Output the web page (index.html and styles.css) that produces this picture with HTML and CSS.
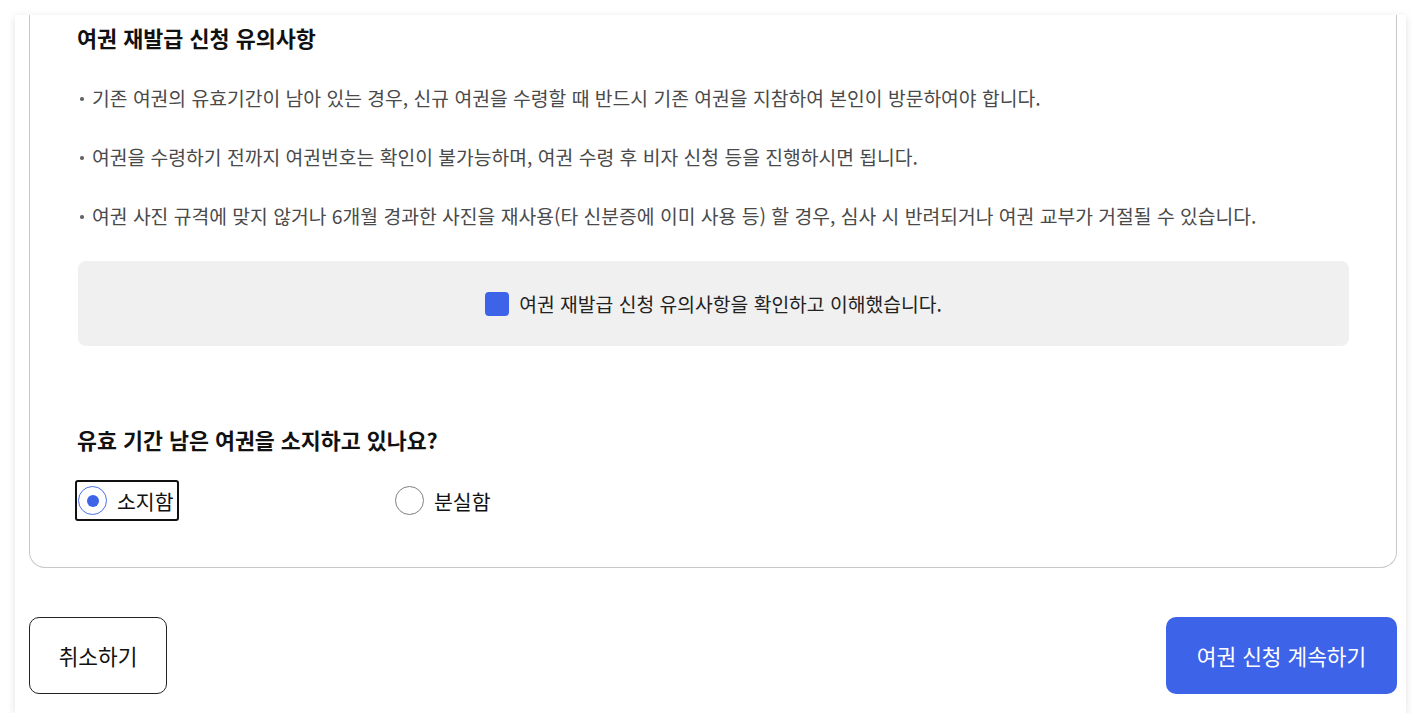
FILE: index.html
```html
<!DOCTYPE html>
<html lang="ko">
<head>
    <meta charset="utf-8">
    <title>여권 재발급 신청</title>
    <link rel="stylesheet" href="styles.css">
</head>
<body>
    <div class="card">
        <div class="notice">
            <h2 class="notice-title">여권 재발급 신청 유의사항</h2>
            <ul class="notice-list">
                <li>기존 여권의 유효기간이 남아 있는 경우, 신규 여권을 수령할 때 반드시 기존 여권을 지참하여 본인이 방문하여야 합니다.</li>
                <li>여권을 수령하기 전까지 여권번호는 확인이 불가능하며, 여권 수령 후 비자 신청 등을 진행하시면 됩니다.</li>
                <li>여권 사진 규격에 맞지 않거나 6개월 경과한 사진을 재사용(타 신분증에 이미 사용 등) 할 경우, 심사 시 반려되거나 여권 교부가 거절될 수 있습니다.</li>
            </ul>

            <!-- 동의 체크 -->
            <div class="agree-box">
                <label class="agree">
                    <span class="check"></span>
                    여권 재발급 신청 유의사항을 확인하고 이해했습니다.
                </label>
            </div>

            <h2 class="question">유효 기간 남은 여권을 소지하고 있나요?</h2>
            <div class="radio-group">
                <label class="radio focused">
                    <span class="radio-mark checked"></span>
                    소지함
                </label>
                <label class="radio">
                    <span class="radio-mark"></span>
                    분실함
                </label>
            </div>
        </div>

        <div class="actions">
            <button class="btn btn-cancel" type="button">취소하기</button>
            <button class="btn btn-primary" type="button">여권 신청 계속하기</button>
        </div>
    </div>
</body>
</html>
```

FILE: styles.css
```css
body {
    margin: 0;
    padding: 15px 15px 0 15px;
    background: #fff;
    font-family: "Noto Sans CJK KR", "Noto Sans", sans-serif;
    color: #111;
}

.card {
    background: #fff;
    box-shadow: 0 2px 8px rgba(0, 0, 0, 0.12);
    padding: 0 9px 19px 14px;
    overflow: hidden;
}

.notice {
    border: 1px solid #c8c8c8;
    border-top: none;
    border-radius: 0 0 16px 16px;
    padding: 9px 47px 46px 47px;
}

.notice-title {
    font-size: 21.8px;
    line-height: 27px;
    font-weight: 700;
    margin: 0;
}

.notice-list {
    list-style: none;
    margin: 35px 0 0 0;
    padding: 0;
    display: flex;
    flex-direction: column;
    gap: 35px;
}

.notice-list li {
    position: relative;
    padding-left: 15px;
    font-size: 19.3px;
    line-height: 24px;
    color: #4a4a4a;
}

.notice-list li::before {
    content: "";
    position: absolute;
    left: 3px;
    top: 11px;
    width: 3.5px;
    height: 3.5px;
    border-radius: 50%;
    background: #666;
}

.agree-box {
    margin-top: 33px;
    height: 85px;
    background: #f0f0f0;
    border-radius: 8px;
    display: flex;
    align-items: center;
    justify-content: center;
    margin-left: 1px;
}

.agree {
    display: flex;
    align-items: center;
    gap: 10px;
    font-size: 19.3px;
    color: #222;
}

.check {
    width: 24px;
    height: 24px;
    border-radius: 4px;
    background: #3d63e9;
}

.question {
    font-size: 21.7px;
    line-height: 27px;
    font-weight: 700;
    margin: 80px 0 0 0;
}

.radio-group {
    display: grid;
    grid-template-columns: 317px 317px;
    margin-top: 27px;
}

.radio {
    display: flex;
    align-items: center;
    gap: 10px;
    font-size: 20.5px;
    height: 41px;
    padding: 0 3px 0 1px;
    margin-left: -2px;
    box-sizing: border-box;
    border: 2px solid transparent;
    border-radius: 3px;
    justify-self: start;
}

.radio.focused {
    border-color: #111;
}

.radio-mark {
    width: 29px;
    height: 29px;
    border-radius: 50%;
    border: 1px solid #808080;
    box-sizing: border-box;
    position: relative;
}

.radio-mark.checked {
    border-color: #4a6ee8;
}

.radio-mark.checked::after {
    content: "";
    position: absolute;
    left: 7.5px;
    top: 7.5px;
    width: 12px;
    height: 12px;
    border-radius: 50%;
    background: #3d63e9;
}

.actions {
    display: flex;
    justify-content: space-between;
    margin-top: 49px;
}

.btn {
    font-family: inherit;
    font-size: 21.4px;
    height: 77px;
    border-radius: 10px;
    cursor: pointer;
}

.btn-cancel {
    width: 138px;
    background: #fff;
    border: 1px solid #222;
    color: #111;
}

.btn-primary {
    width: 231px;
    background: #3d63e9;
    border: none;
    color: #fff;
}
```
